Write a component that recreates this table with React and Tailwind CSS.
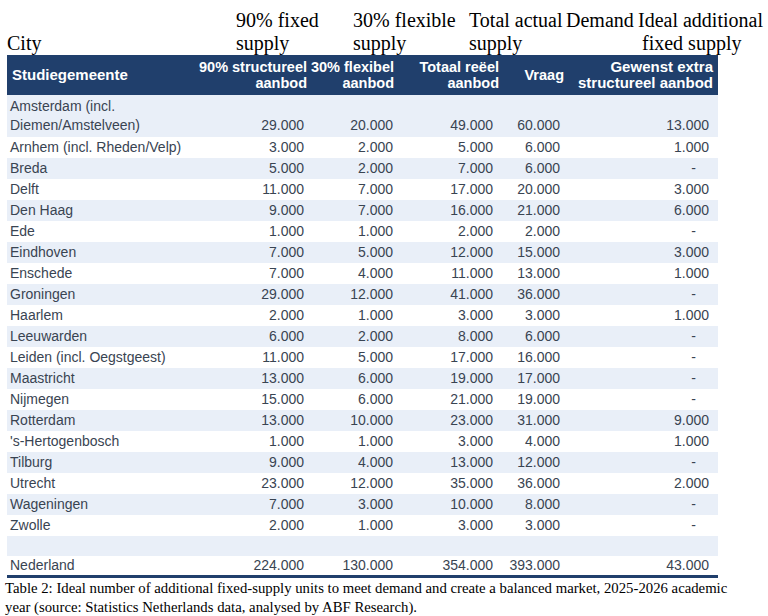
import React from "react";

const rows = [
  ["Arnhem (incl. Rheden/Velp)", "3.000", "2.000", "5.000", "6.000", "1.000"],
  ["Breda", "5.000", "2.000", "7.000", "6.000", "-"],
  ["Delft", "11.000", "7.000", "17.000", "20.000", "3.000"],
  ["Den Haag", "9.000", "7.000", "16.000", "21.000", "6.000"],
  ["Ede", "1.000", "1.000", "2.000", "2.000", "-"],
  ["Eindhoven", "7.000", "5.000", "12.000", "15.000", "3.000"],
  ["Enschede", "7.000", "4.000", "11.000", "13.000", "1.000"],
  ["Groningen", "29.000", "12.000", "41.000", "36.000", "-"],
  ["Haarlem", "2.000", "1.000", "3.000", "3.000", "1.000"],
  ["Leeuwarden", "6.000", "2.000", "8.000", "6.000", "-"],
  ["Leiden (incl. Oegstgeest)", "11.000", "5.000", "17.000", "16.000", "-"],
  ["Maastricht", "13.000", "6.000", "19.000", "17.000", "-"],
  ["Nijmegen", "15.000", "6.000", "21.000", "19.000", "-"],
  ["Rotterdam", "13.000", "10.000", "23.000", "31.000", "9.000"],
  ["'s-Hertogenbosch", "1.000", "1.000", "3.000", "4.000", "1.000"],
  ["Tilburg", "9.000", "4.000", "13.000", "12.000", "-"],
  ["Utrecht", "23.000", "12.000", "35.000", "36.000", "2.000"],
  ["Wageningen", "7.000", "3.000", "10.000", "8.000", "-"],
  ["Zwolle", "2.000", "1.000", "3.000", "3.000", "-"],
];

const cols = "grid grid-cols-[183px_119px_88px_105px_64px_152px]";

function Row({ r, band }) {
  return (
    <div className={`${cols} h-[21px] leading-[21px] ${band ? "bg-[#e9eff8]" : "bg-white"}`}>
      <div className="pl-[3px] whitespace-nowrap">{r[0]}</div>
      <div className="text-right pr-[5px]">{r[1]}</div>
      <div className="text-right pr-[4px]">{r[2]}</div>
      <div className="text-right pr-[9px]">{r[3]}</div>
      <div className="text-right pr-[6px]">{r[4]}</div>
      <div className={`text-right ${r[5] === "-" ? "pr-[22px]" : "pr-[9px]"}`}>{r[5]}</div>
    </div>
  );
}

export default function App() {
  return (
    <div className="w-[768px] h-[616px] bg-white overflow-hidden">
      {/* english labels above the table */}
      <div className="flex items-end pt-[9px] h-[55px] text-[20px] leading-[23px] text-black font-['Liberation_Serif',serif] whitespace-nowrap">
        <div className="w-[236px] pl-[7px]">City</div>
        <div className="w-[117px]">90% fixed<br />supply</div>
        <div className="w-[116px]">30% flexible<br />supply</div>
        <div className="w-[97px]">Total actual<br />supply</div>
        <div className="w-[72px] self-start">Demand</div>
        <div>
          Ideal additional
          <br />
          <span className="pl-[4px]">fixed supply</span>
        </div>
      </div>

      <div className="ml-[7px] w-[711px] font-['Liberation_Sans',Arial,sans-serif] text-[14px] text-[#394452]">
        {/* header */}
        <div className={`${cols} h-[40px] bg-[#203f6c] text-white font-bold text-[14.5px] leading-[16px]`}>
          <div className="pl-[5px] flex items-center text-[15px]">Studiegemeente</div>
          <div className="flex items-center justify-end text-right pr-[2px] whitespace-nowrap">90% structureel<br />aanbod</div>
          <div className="flex items-center justify-end text-right pr-[3px] whitespace-nowrap">30% flexibel<br />aanbod</div>
          <div className="flex items-center justify-end text-right pr-[3px] whitespace-nowrap">Totaal reëel<br />aanbod</div>
          <div className="flex items-center justify-end pr-[2px]">Vraag</div>
          <div className="flex items-center justify-end text-right pr-[5px] whitespace-nowrap text-[15px]">Gewenst extra<br />structureel aanbod</div>
        </div>

        {/* Amsterdam, two lines */}
        <div className={`${cols} h-[42px] bg-[#e9eff8]`}>
          <div className="pl-[3px] pt-[2px] leading-[19px]">Amsterdam (incl.<br />Diemen/Amstelveen)</div>
          <div className="self-end pb-[1px] leading-[21px] text-right pr-[5px]">29.000</div>
          <div className="self-end pb-[1px] leading-[21px] text-right pr-[4px]">20.000</div>
          <div className="self-end pb-[1px] leading-[21px] text-right pr-[9px]">49.000</div>
          <div className="self-end pb-[1px] leading-[21px] text-right pr-[6px]">60.000</div>
          <div className="self-end pb-[1px] leading-[21px] text-right pr-[9px]">13.000</div>
        </div>

        {rows.map((r, i) => (
          <Row key={r[0]} r={r} band={i % 2 === 1} />
        ))}

        <div className="h-[20px] bg-[#e9eff8]" />
        <div className="border-b-[3px] border-[#203f6c]">
          <div className={`${cols} h-[19px] leading-[19px]`}>
            <div className="pl-[3px]">Nederland</div>
            <div className="text-right pr-[5px]">224.000</div>
            <div className="text-right pr-[4px]">130.000</div>
            <div className="text-right pr-[9px]">354.000</div>
            <div className="text-right pr-[6px]">393.000</div>
            <div className="text-right pr-[9px]">43.000</div>
          </div>
        </div>
      </div>

      <p className="pl-[5px] pt-[1px] text-[14.75px] leading-[19px] text-black font-['Liberation_Serif',serif] whitespace-nowrap">
        Table 2: Ideal number of additional fixed-supply units to meet demand and create a balanced market, 2025-2026 academic
        <br />
        year (source: Statistics Netherlands data, analysed by ABF Research).
      </p>
    </div>
  );
}
